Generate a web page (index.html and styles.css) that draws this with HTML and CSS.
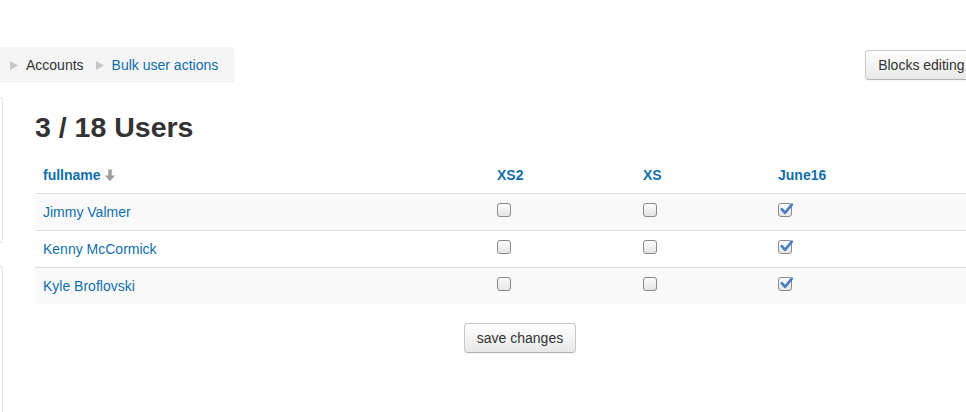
FILE: index.html
```html
<!DOCTYPE html>
<html>
<head>
<meta charset="utf-8">
<link rel="stylesheet" href="styles.css">
</head>
<body>
<div class="page">
  <div class="navbar">
    <nav class="crumbs">
      <span class="sep"><svg width="8" height="9" viewBox="0 0 8 9"><polygon points="0,0 8,4.5 0,9" fill="#c6c6c6"/></svg></span>
      <span class="crumb">Accounts</span>
      <span class="sep"><svg width="8" height="9" viewBox="0 0 8 9"><polygon points="0,0 8,4.5 0,9" fill="#c6c6c6"/></svg></span>
      <a class="crumb link" href="#">Bulk user actions</a>
    </nav>
    <button class="btn btn-edit">Blocks editing on</button>
  </div>
  <div class="main">
    <aside class="side">
      <div class="block block-a"></div>
      <div class="block block-b"></div>
    </aside>
    <section class="content">
      <h2 class="title">3 / 18 Users</h2>
      <table class="users">
        <colgroup>
          <col class="c-name"><col class="c-xs2"><col class="c-xs"><col class="c-june">
        </colgroup>
        <thead>
          <tr>
            <th><a href="#" class="hlink">fullname</a> <svg class="sort" width="12" height="13" viewBox="0 0 12 13"><path d="M4.2 0.5h3.6v6h3.4L6 12.3 0.8 6.5h3.4z" fill="#a0a0a0"/></svg></th>
            <th><a href="#" class="hlink">XS2</a></th>
            <th><a href="#" class="hlink">XS</a></th>
            <th><a href="#" class="hlink">June16</a></th>
          </tr>
        </thead>
        <tbody>
          <tr>
            <td><a href="#" class="link">Jimmy Valmer</a></td>
            <td><span class="cb"></span></td>
            <td><span class="cb"></span></td>
            <td><span class="cb checked"><svg width="13" height="12" viewBox="0 0 13 12"><path d="M1.8 6.2l3.2 3.6L11.8 1.6" fill="none" stroke="#4a7cc6" stroke-width="2.6" stroke-linecap="round" stroke-linejoin="round"/></svg></span></td>
          </tr>
          <tr>
            <td><a href="#" class="link">Kenny McCormick</a></td>
            <td><span class="cb"></span></td>
            <td><span class="cb"></span></td>
            <td><span class="cb checked"><svg width="13" height="12" viewBox="0 0 13 12"><path d="M1.8 6.2l3.2 3.6L11.8 1.6" fill="none" stroke="#4a7cc6" stroke-width="2.6" stroke-linecap="round" stroke-linejoin="round"/></svg></span></td>
          </tr>
          <tr>
            <td><a href="#" class="link">Kyle Broflovski</a></td>
            <td><span class="cb"></span></td>
            <td><span class="cb"></span></td>
            <td><span class="cb checked"><svg width="13" height="12" viewBox="0 0 13 12"><path d="M1.8 6.2l3.2 3.6L11.8 1.6" fill="none" stroke="#4a7cc6" stroke-width="2.6" stroke-linecap="round" stroke-linejoin="round"/></svg></span></td>
          </tr>
        </tbody>
      </table>
      <div class="actions">
        <button class="btn">save changes</button>
      </div>
    </section>
  </div>
</div>
</body>
</html>
```
FILE: styles.css
```css
html, body {
  margin: 0;
  padding: 0;
  background: #fff;
  overflow: hidden;
}
body {
  font-family: "Liberation Sans", Arial, sans-serif;
  font-size: 14px;
  line-height: 20px;
  color: #333;
  width: 966px;
  height: 412px;
}
.page {
  width: 1010px;
  padding-top: 47px;
}
.navbar {
  display: flex;
  justify-content: space-between;
  align-items: flex-start;
  height: 36px;
}
.crumbs {
  display: flex;
  align-items: center;
  background: #f5f5f5;
  border-radius: 0 4px 4px 0;
  padding: 8px 15px 8px 10px;
  height: 20px;
  width: 210px;
}
.sep {
  display: inline-flex;
  align-items: center;
  margin-right: 8px;
  padding-top: 1px;
}
.crumb {
  margin-right: 12px;
  color: #333;
}
.crumbs .link:last-child { margin-right: 0; }
.link, .hlink {
  color: #0f6fac;
  text-decoration: none;
}
.hlink { font-weight: bold; }
.btn {
  font-family: "Liberation Sans", Arial, sans-serif;
  font-size: 14px;
  line-height: 20px;
  color: #333;
  padding: 4px 12px;
  border: 1px solid #c8c8c8;
  border-bottom-color: #b3b3b3;
  border-radius: 4px;
  background: linear-gradient(#ffffff, #e8e8e8);
  box-shadow: inset 0 1px 0 rgba(255,255,255,.2), 0 1px 2px rgba(0,0,0,.05);
  cursor: pointer;
  white-space: nowrap;
}
.btn-edit {
  margin-top: 3px;
  margin-right: 13px;
}
.main {
  display: flex;
  margin-top: 14px;
}
.side {
  width: 3px;
  flex: none;
  display: flex;
  flex-direction: column;
}
.block {
  border: 1px solid #e3e3e3;
  border-left: 0;
  border-radius: 0 4px 4px 0;
  width: 2px;
}
.block-a { height: 144px; }
.block-b {
  height: 160px;
  margin-top: 23px;
  border-bottom: 0;
  border-radius: 0 4px 0 0;
}
.content {
  margin-left: 32px;
  width: 970px;
}
.title {
  font-size: 28.5px;
  line-height: 40px;
  font-weight: bold;
  margin: 10px 0;
  color: #333;
}
.users {
  width: 970px;
  border-collapse: collapse;
  border-spacing: 0;
  table-layout: fixed;
  margin-bottom: 19px;
}
.c-name { width: 454px; }
.c-xs2 { width: 146px; }
.c-xs { width: 135px; }
.c-june { width: 235px; }
.users th, .users td {
  padding: 8px;
  line-height: 20px;
  text-align: left;
  vertical-align: top;
}
.users th { font-weight: bold; }
.users td { border-top: 1px solid #ddd; }
.users tbody tr:nth-child(odd) td { background: #f9f9f9; }
.sort {
  vertical-align: -2px;
  margin-left: 0;
}
.cb {
  display: inline-flex;
  align-items: center;
  justify-content: center;
  box-sizing: border-box;
  width: 14px;
  height: 14px;
  margin-top: 1px;
  border: 1px solid #8a8a8a;
  border-radius: 3px;
  background: linear-gradient(#fcfcfc, #e4e4e4);
  vertical-align: top;
}
.cb svg { margin-top: -3px; margin-left: 2px; flex: none; }
.actions {
  display: flex;
  justify-content: center;
}
```
